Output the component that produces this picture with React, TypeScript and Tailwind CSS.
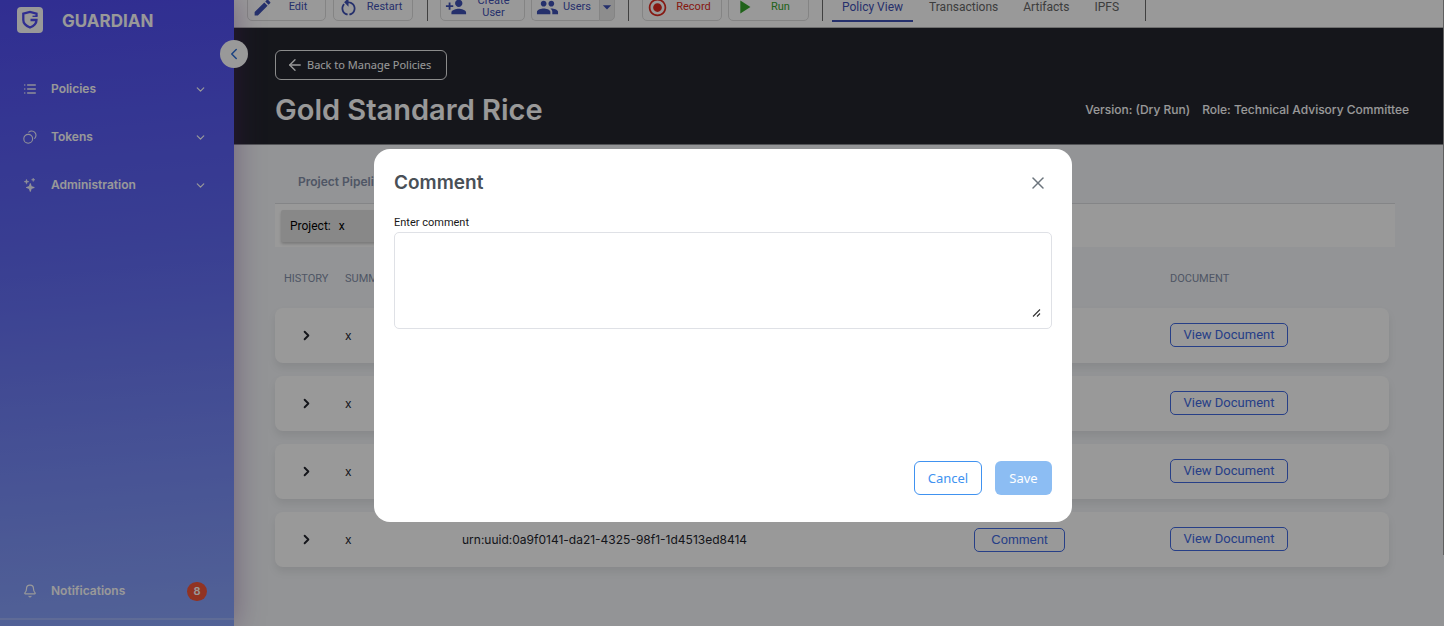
import type { ReactNode } from "react";
import { MdEdit, MdPersonAddAlt1, MdGroup, MdArrowDropDown, MdPlayArrow, MdRadioButtonChecked } from "react-icons/md";
import { ArrowLeft, ChevronDown, ChevronLeft, ChevronRight, X, Bell, List } from "lucide-react";

function Logo() {
  return (
    <svg viewBox="0 0 26 26" className="h-[26px] w-[26px]" aria-hidden="true">
      <rect width="26" height="26" rx="4" fill="#fff" />
      <path d="M19.500 9.300V6.600L13 5 6.300 6.600v6.400c0 3.500 2.800 5.900 6.700 7.500 3.900-1.600 6.500-3.900 6.500-7.500h-6" fill="none" stroke="#514ef2" strokeWidth="2.300" />
      <path d="M20.500 9.300h-5" fill="none" stroke="#514ef2" strokeWidth="1.400" />
    </svg>
  );
}

function TokensIcon() {
  return (
    <svg viewBox="0 0 14 14" className="h-[14px] w-[14px]" fill="none" stroke="currentColor" strokeWidth="1.1" strokeLinecap="round" aria-hidden="true">
      <circle cx="5.200" cy="8.800" r="4.400" />
      <path d="M5.800 2.200A4.100 4.100 0 1 1 11.700 8.300" />
    </svg>
  );
}

function SparklesIcon() {
  return (
    <svg viewBox="0 0 14 14" className="h-[14px] w-[14px]" fill="currentColor" aria-hidden="true">
      <path d="M7.300 5.500l1 3 3 1-3 1-1 3-1-3-3-1 3-1z" stroke="currentColor" strokeWidth=".9" />
      <path d="M3.500 1.200l.6 1.900 1.900.6-1.900.6-.6 1.900-.6-1.900L1 3.700l1.900-.6z" stroke="currentColor" strokeWidth=".4" />
      <path d="M10.200 0l.5 1.300 1.300.5-1.300.5-.5 1.300-.5-1.300-1.300-.5 1.300-.5z" stroke="currentColor" strokeWidth=".4" />
    </svg>
  );
}

const navItems: { label: string; icon: ReactNode }[] = [
  { label: "Policies", icon: <List size={14} strokeWidth={2.6} /> },
  { label: "Tokens", icon: <TokensIcon /> },
  { label: "Administration", icon: <SparklesIcon /> },
];

function Sidebar() {
  return (
    <aside className="relative z-10 flex w-[234px] shrink-0 flex-col bg-[linear-gradient(175deg,#514df2_0%,#6069f4_40%,#89a4fb_100%)] font-[Inter,sans-serif] text-white shadow-[0_0_28px_rgba(110,50,140,0.45)]">
      <div className="flex h-[65px] items-start gap-[19px] pt-[7px] pl-[17px]">
        <Logo />
        <span className="text-[17px] leading-[28px] font-bold">GUARDIAN</span>
      </div>
      <nav className="flex flex-col">
        {navItems.map((item) => (
          <button key={item.label} type="button" className="flex h-12 w-full items-center pr-[27px] pl-[23px] text-left text-xs font-semibold">
            <span className="w-7 text-white/90">{item.icon}</span>
            <span className="grow">{item.label}</span>
            <ChevronDown size={13} strokeWidth={2.2} />
          </button>
        ))}
      </nav>
      <button type="button" className="mt-auto flex h-[54px] w-full items-center pr-[27px] pl-[23px] text-left text-xs font-semibold">
        <span className="w-7"><Bell size={14} strokeWidth={2} /></span>
        <span className="grow">Notifications</span>
        <span className="flex h-[19px] w-5 items-center justify-center rounded-full bg-[#f2553a] text-[11px]">8</span>
      </button>
      <div className="h-2 border-t-2 border-white/20" />
      <button type="button" aria-label="Collapse menu" className="absolute top-10 -right-[14px] flex h-7 w-7 items-center justify-center rounded-full bg-white text-[#2c6fd8]">
        <ChevronLeft size={18} strokeWidth={2} />
      </button>
    </aside>
  );
}

const toolButton = "flex h-[34px] items-center rounded-[5px] border border-[#dcdcdc] text-[11px] leading-3";

function Divider() {
  return <span className="h-8 w-px bg-[#6b6b6b]" />;
}

function Toolbar() {
  return (
    <header className="flex h-7 items-end overflow-hidden border-b border-[#b8b8b8] bg-white pb-[6px] pl-[13px] font-[Roboto,sans-serif] text-[#3f51b5]">
      <button type="button" className={`${toolButton} w-[79px] pt-[6px] pl-1`}>
        <MdEdit size={21} /><span className="grow pr-0.5 text-center">Edit</span>
      </button>
      <button type="button" className={`${toolButton} ml-[7px] w-20 pt-[6px] pl-1`}>
        <svg viewBox="0 0 24 24" className="h-[21px] w-[21px]" fill="currentColor" aria-hidden="true">
          <path d="M12 5V1L7 6l5 5V7c3.310 0 6 2.690 6 6 0 2.970-2.170 5.430-5 5.910v2.020c3.950-.49 7-3.850 7-7.930 0-4.420-3.580-8-8-8zm-6 8c0-1.650.67-3.150 1.760-4.240L6.340 7.340C4.900 8.790 4 10.790 4 13c0 4.080 3.050 7.440 7 7.930v-2.020c-2.830-.48-5-2.940-5-5.910z" />
        </svg>
        <span className="grow pr-0.5 text-center">Restart</span>
      </button>
      <span className="w-[14px]" /><Divider />
      <button type="button" className={`${toolButton} ml-3 w-[85px] pt-[6px] pl-1`}>
        <MdPersonAddAlt1 size={22} className="-scale-x-100" /><span className="grow pr-1 text-center">Create<br />User</span>
      </button>
      <div className="ml-[6px] flex">
        <button type="button" className={`${toolButton} w-[68px] rounded-r-none border-r-0 pt-[6px] pl-1`}>
          <MdGroup size={23} /><span className="grow pr-1 text-center">Users</span>
        </button>
        <button type="button" aria-label="More users" className={`${toolButton} w-4 justify-center rounded-l-none bg-[#ebebeb] pt-[6px]`}>
          <MdArrowDropDown size={20} className="shrink-0" />
        </button>
      </div>
      <span className="w-[13px]" /><Divider />
      <button type="button" className={`${toolButton} ml-[13px] w-20 pt-[6px] pl-1 text-[#e02b20]`}>
        <MdRadioButtonChecked size={21} /><span className="grow pr-0.5 text-center">Record</span>
      </button>
      <button type="button" className={`${toolButton} ml-[6px] w-[81px] pt-[6px] pl-1 text-[#36a52c]`}>
        <MdPlayArrow size={22} /><span className="grow pr-0.5 text-center">Run</span>
      </button>
      <span className="w-[13px]" /><Divider />
      <nav className="mr-[26px] ml-[9px] -mb-px flex text-xs text-[#666]">
        <a href="#policy" className="h-[27px] border-b-2 border-[#3f51b5] px-[10px] pt-[5px] leading-[14px] text-[#3f51b5]">Policy View</a>
        <a href="#transactions" className="h-[27px] pt-[5px] pl-4 leading-[14px]">Transactions</a>
        <a href="#artifacts" className="h-[27px] pt-[5px] pl-[25px] leading-[14px]">Artifacts</a>
        <a href="#ipfs" className="h-[27px] pt-[5px] pl-[25px] leading-[14px]">IPFS</a>
      </nav>
      <Divider />
    </header>
  );
}

const rows: { id: string; ref?: string; comment?: boolean }[] = [
  { id: "a" },
  { id: "b" },
  { id: "c" },
  { id: "d", ref: "urn:uuid:0a9f0141-da21-4325-98f1-1d4513ed8414", comment: true },
];

function Documents() {
  return (
    <table className="mr-[6px] table-fixed border-separate border-spacing-x-0 border-spacing-y-[13px] text-left text-xs">
      <thead>
        <tr className="h-[35px] font-[Roboto,sans-serif] text-[11px] text-[#848fa9]">
          <th className="w-[70px] pt-1 pl-[9px] font-normal">HISTORY</th>
          <th className="w-[117px] pt-1 font-normal">SUMMARY</th>
          <th aria-label="Reference" />
          <th aria-label="Action" className="w-[196px]" />
          <th className="w-[219px] pt-1 font-normal">DOCUMENT</th>
        </tr>
      </thead>
      <tbody>
        {rows.map((row) => (
          <tr key={row.id} className="h-[55px] rounded-lg bg-white text-[#23252e] shadow-[0_5px_8px_rgba(0,0,0,0.08)]">
            <td className="rounded-l-lg pl-[24px]">
              <button type="button" aria-label="Show history" className="block"><ChevronRight size={15} strokeWidth={3} /></button>
            </td>
            <td>x</td>
            <td>{row.ref}</td>
            <td>
              {row.comment && (
                <button type="button" className="h-6 w-[91px] rounded-[5px] border border-[#4169e2] font-['Liberation_Sans',Arial,sans-serif] text-[13px] text-[#4169e2]">Comment</button>
              )}
            </td>
            <td className="rounded-r-lg pb-px">
              <button type="button" className="h-6 w-[118px] rounded-[5px] border border-[#4169e2] font-[Roboto,sans-serif] text-[13px] leading-5 text-[#4169e2]">View Document</button>
            </td>
          </tr>
        ))}
      </tbody>
    </table>
  );
}

function CommentDialog() {
  return (
    <div className="fixed inset-0 z-20 flex items-start justify-center bg-black/40 pt-[149px] pl-[2px]">
      <section role="dialog" aria-labelledby="dialog-title" className="flex min-h-[373px] w-full max-w-[698px] flex-col rounded-2xl bg-white px-5 pt-5 pb-[27px] font-[Inter,sans-serif]">
        <div className="flex h-7 items-center justify-between">
          <h2 id="dialog-title" className="text-[19px] font-semibold text-[#495057]">Comment</h2>
          <button type="button" aria-label="Close" className="pr-1 text-[#6c757d]"><X size={20} strokeWidth={1.8} /></button>
        </div>
        <label htmlFor="comment" className="mt-[17px] font-[Roboto,sans-serif] text-[11px] leading-[18px] text-[#181818]">Enter comment</label>
        <div className="relative">
          <textarea id="comment" className="block h-[97px] w-full resize-none rounded-[5px] border border-[#dfe1e6] p-2 text-sm outline-none" />
          <svg viewBox="0 0 10 10" className="pointer-events-none absolute right-[10px] bottom-[11px] h-[10px] w-[10px]" stroke="#333" strokeWidth="1.100" aria-hidden="true">
            <path d="M1 8.500L8 1.500M5 8.500L8 5.500" />
          </svg>
        </div>
        <div className="mt-auto flex justify-end gap-[13px] font-['Noto_Sans','Open_Sans',sans-serif] text-[13px]">
          <button type="button" className="h-[34px] w-[68px] rounded-md border border-[#4092f0] pt-px text-[#4092f0]">Cancel</button>
          <button type="button" className="h-[34px] w-[57px] rounded-md bg-[#8cbdf3] pt-px text-white">Save</button>
        </div>
      </section>
    </div>
  );
}

export default function App() {
  return (
    <div className="relative flex min-h-screen bg-[#f5f7fa] font-[Inter,sans-serif]">
      <Sidebar />
      <div className="flex min-w-0 grow flex-col">
        <Toolbar />
        <section className="h-[117px] border-b border-[#8b8d92] bg-[#23252e] pt-[22px] pr-[35px] pl-[41px] text-white">
          <a href="#policies" className="flex h-[30px] w-[172px] items-center gap-[3px] rounded-md border border-white/90 pl-[10px] font-['Noto_Sans','Open_Sans',sans-serif] text-[11px]">
            <ArrowLeft size={18} strokeWidth={1.8} />Back to Manage Policies
          </a>
          <div className="flex items-center justify-between pt-3">
            <h1 className="text-[29px] leading-9 font-semibold">Gold Standard Rice</h1>
            <p className="flex gap-3 text-xs font-medium"><span>Version: (Dry Run)</span><span>Role: Technical Advisory Committee</span></p>
          </div>
        </section>
        <main className="flex flex-col pr-[49px] pl-[41px]">
          <div className="flex h-[59px] items-end border-b border-[#dcdee2] pb-3 pl-[23px]">
            <a href="#pipeline" className="text-xs leading-[18px] font-semibold text-[#848fa9]">Project Pipeline</a>
          </div>
          <div className="flex h-[43px] items-center bg-white pl-[6px] font-[Roboto,sans-serif] text-xs text-black">
            <div className="flex h-8 w-[180px] items-center gap-2 rounded-[2px] bg-[#e3e3e3] pl-[9px] shadow-[0_2px_3px_rgba(0,0,0,0.2)]"><span>Project:</span><span>x</span></div>
          </div>
          <Documents />
        </main>
      </div>
      <div className="absolute top-0 right-0 h-[555px] w-px bg-[#a0a0a0]" />
      <CommentDialog />
    </div>
  );
}
